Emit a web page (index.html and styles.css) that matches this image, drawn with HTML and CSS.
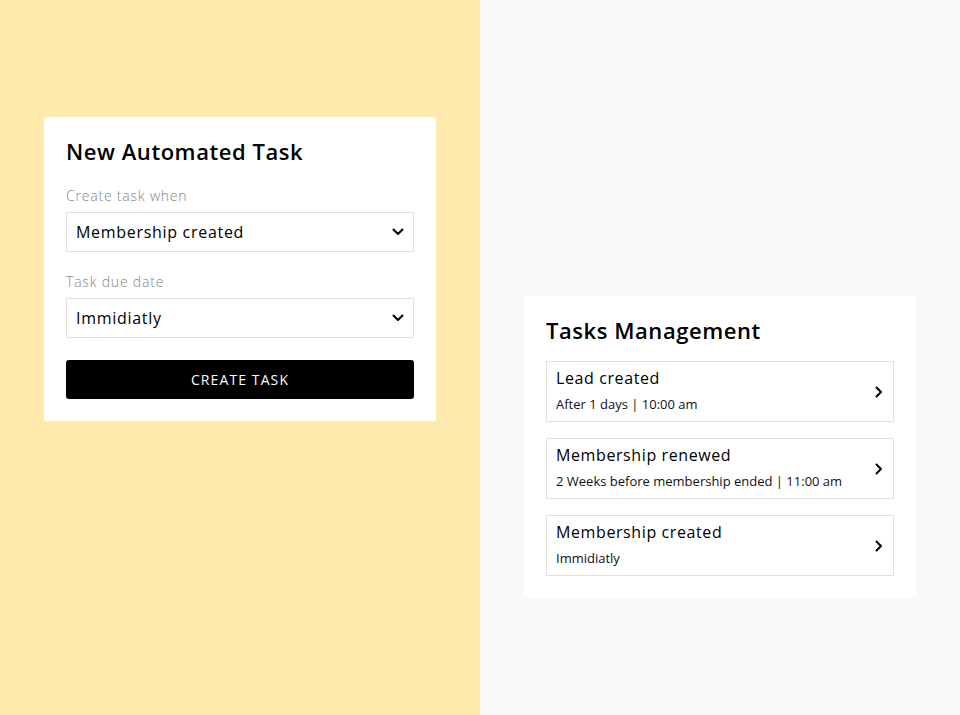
FILE: index.html
```html
<!DOCTYPE html>
<html lang="en">
<head>
    <meta charset="UTF-8">
    <title>Automated Tasks</title>
    <link rel="stylesheet" href="styles.css">
</head>
<body>
    <div class="screen">
        <!-- New task form -->
        <div class="pane pane-yellow">
            <div class="card form-card">
                <h2>New Automated Task</h2>
                <label class="field-label">Create task when</label>
                <div class="select">
                    <span>Membership created</span>
                    <svg class="chev" viewBox="0 0 12 8" width="12" height="8"><path d="M1.5 1.5 6 6l4.5-4.5" fill="none" stroke="#000" stroke-width="2" stroke-linecap="round" stroke-linejoin="round"/></svg>
                </div>
                <label class="field-label">Task due date</label>
                <div class="select">
                    <span>Immidiatly</span>
                    <svg class="chev" viewBox="0 0 12 8" width="12" height="8"><path d="M1.5 1.5 6 6l4.5-4.5" fill="none" stroke="#000" stroke-width="2" stroke-linecap="round" stroke-linejoin="round"/></svg>
                </div>
                <button class="btn">CREATE TASK</button>
            </div>
        </div>

        <!-- Task list -->
        <div class="pane pane-grey">
            <div class="card list-card">
                <h2>Tasks Management</h2>
                <div class="task">
                    <div class="task-text">
                        <div class="task-title">Lead created</div>
                        <div class="task-sub">After 1 days | 10:00 am</div>
                    </div>
                    <svg class="arrow" viewBox="0 0 8 12" width="8" height="12"><path d="M1.5 1.5 6 6l-4.5 4.5" fill="none" stroke="#000" stroke-width="2" stroke-linecap="round" stroke-linejoin="round"/></svg>
                </div>
                <div class="task">
                    <div class="task-text">
                        <div class="task-title">Membership renewed</div>
                        <div class="task-sub">2 Weeks before membership ended | 11:00 am</div>
                    </div>
                    <svg class="arrow" viewBox="0 0 8 12" width="8" height="12"><path d="M1.5 1.5 6 6l-4.5 4.5" fill="none" stroke="#000" stroke-width="2" stroke-linecap="round" stroke-linejoin="round"/></svg>
                </div>
                <div class="task">
                    <div class="task-text">
                        <div class="task-title">Membership created</div>
                        <div class="task-sub">Immidiatly</div>
                    </div>
                    <svg class="arrow" viewBox="0 0 8 12" width="8" height="12"><path d="M1.5 1.5 6 6l-4.5 4.5" fill="none" stroke="#000" stroke-width="2" stroke-linecap="round" stroke-linejoin="round"/></svg>
                </div>
            </div>
        </div>
    </div>
</body>
</html>
```

FILE: styles.css
```css
* {
    margin: 0;
    padding: 0;
    box-sizing: border-box;
}

body {
    font-family: 'Open Sans', 'Liberation Sans', sans-serif;
    color: #000;
}

.screen {
    display: flex;
    width: 960px;
    height: 715px;
}

.pane {
    width: 480px;
    height: 100%;
    padding-left: 44px;
}

.pane-yellow {
    background: #ffeaad;
    padding-top: 117px;
}

.pane-grey {
    background: #f8f8f8;
    padding-top: 296px;
}

.card {
    width: 392px;
    background: #fff;
    border-radius: 3px;
    padding: 22px;
}

.card h2 {
    font-weight: 600;
    font-size: 22px;
    line-height: 25px;
    letter-spacing: 0.55px;
}

.form-card h2 {
    margin-bottom: 23px;
}

.field-label {
    display: block;
    font-size: 14px;
    font-weight: 300;
    color: #858585;
    line-height: 18px;
    letter-spacing: 0.8px;
    margin-bottom: 7px;
}

.select {
    display: flex;
    align-items: center;
    justify-content: space-between;
    height: 40px;
    border: 1px solid #e0e0e0;
    padding: 0 9px 0 9px;
    font-size: 16px;
    letter-spacing: 0.7px;
    margin-bottom: 21px;
}

.select:last-of-type {
    margin-bottom: 22px;
}

.btn {
    display: block;
    width: 100%;
    height: 39px;
    background: #000;
    color: #fff;
    border: none;
    border-radius: 3px;
    font-family: inherit;
    font-size: 14px;
    font-weight: 500;
    letter-spacing: 1.1px;
}

.list-card h2 {
    margin-bottom: 18px;
}

.task {
    display: flex;
    align-items: center;
    justify-content: space-between;
    height: 61px;
    border: 1px solid #e0e0e0;
    padding: 0 10px 3px 9px;
    margin-bottom: 16px;
}

.task:last-child {
    margin-bottom: 0;
}

.task .arrow {
    margin-top: 3px;
}

.task-title {
    font-size: 16px;
    line-height: 22px;
    letter-spacing: 0.6px;
}

.task-sub {
    font-size: 13px;
    line-height: 18px;
    margin-top: 6px;
    color: #111;
}
```
